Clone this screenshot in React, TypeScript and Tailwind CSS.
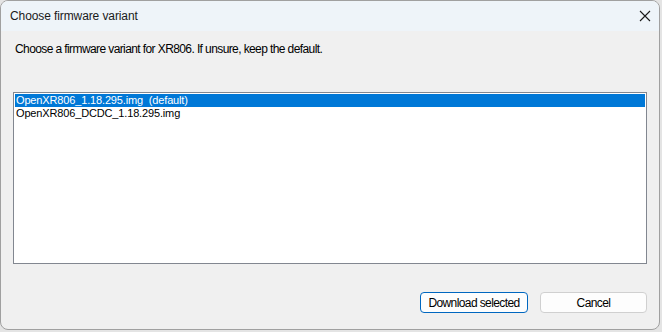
import React from "react";

export default function App() {
  const font = { fontFamily: '"Segoe UI", "Liberation Sans", Arial, sans-serif' };
  return (
    <div className="w-[662px] h-[332px] bg-[#e4e4e4] relative overflow-hidden" style={font}>
      <div className="w-[660px] h-[330px] rounded-[8px] border border-[#a0a0a0] bg-[#f0f0f0] overflow-hidden flex flex-col">
        <div className="h-[30px] bg-[#eef4f9] flex items-center justify-between pl-[9px] pr-[7px] shrink-0">
          <span className="text-[12px] text-[#1a1a1a] tracking-[-0.1px]">Choose firmware variant</span>
          <svg width="12" height="12" viewBox="0 0 12 12" className="mr-[1px]">
            <path d="M1 1 L11 11 M11 1 L1 11" stroke="#1a1a1a" strokeWidth="1.1" fill="none" />
          </svg>
        </div>
        <div className="flex-1 flex flex-col px-[12px]">
          <div className="text-[12px] text-[#000] mt-[10px] ml-[2px] leading-[16px] tracking-[-0.6px]">
            Choose a firmware variant for XR806. If unsure, keep the default.
          </div>
          <div className="mt-[35px] h-[172px] border border-[#828790] bg-white p-[1px] text-[11px] leading-[13px] tracking-[-0.15px]">
            <div className="h-[13px] bg-[#0078d7] text-white pl-[1px] whitespace-pre">OpenXR806_1.18.295.img  (default)</div>
            <div className="h-[13px] text-black pl-[1px]">OpenXR806_DCDC_1.18.295.img</div>
          </div>
          <div className="flex justify-end gap-[12px] mt-[28px]">
            <button className="w-[108px] h-[21px] rounded-[4px] border border-[#0067c0] bg-[#fdfdfd] text-[12px] text-black leading-none tracking-[-0.6px]">
              Download selected
            </button>
            <button className="w-[107px] h-[21px] rounded-[4px] border border-[#d0d0d0] bg-[#fdfdfd] text-[12px] text-black leading-none tracking-[-0.6px]">
              Cancel
            </button>
          </div>
        </div>
      </div>
    </div>
  );
}
